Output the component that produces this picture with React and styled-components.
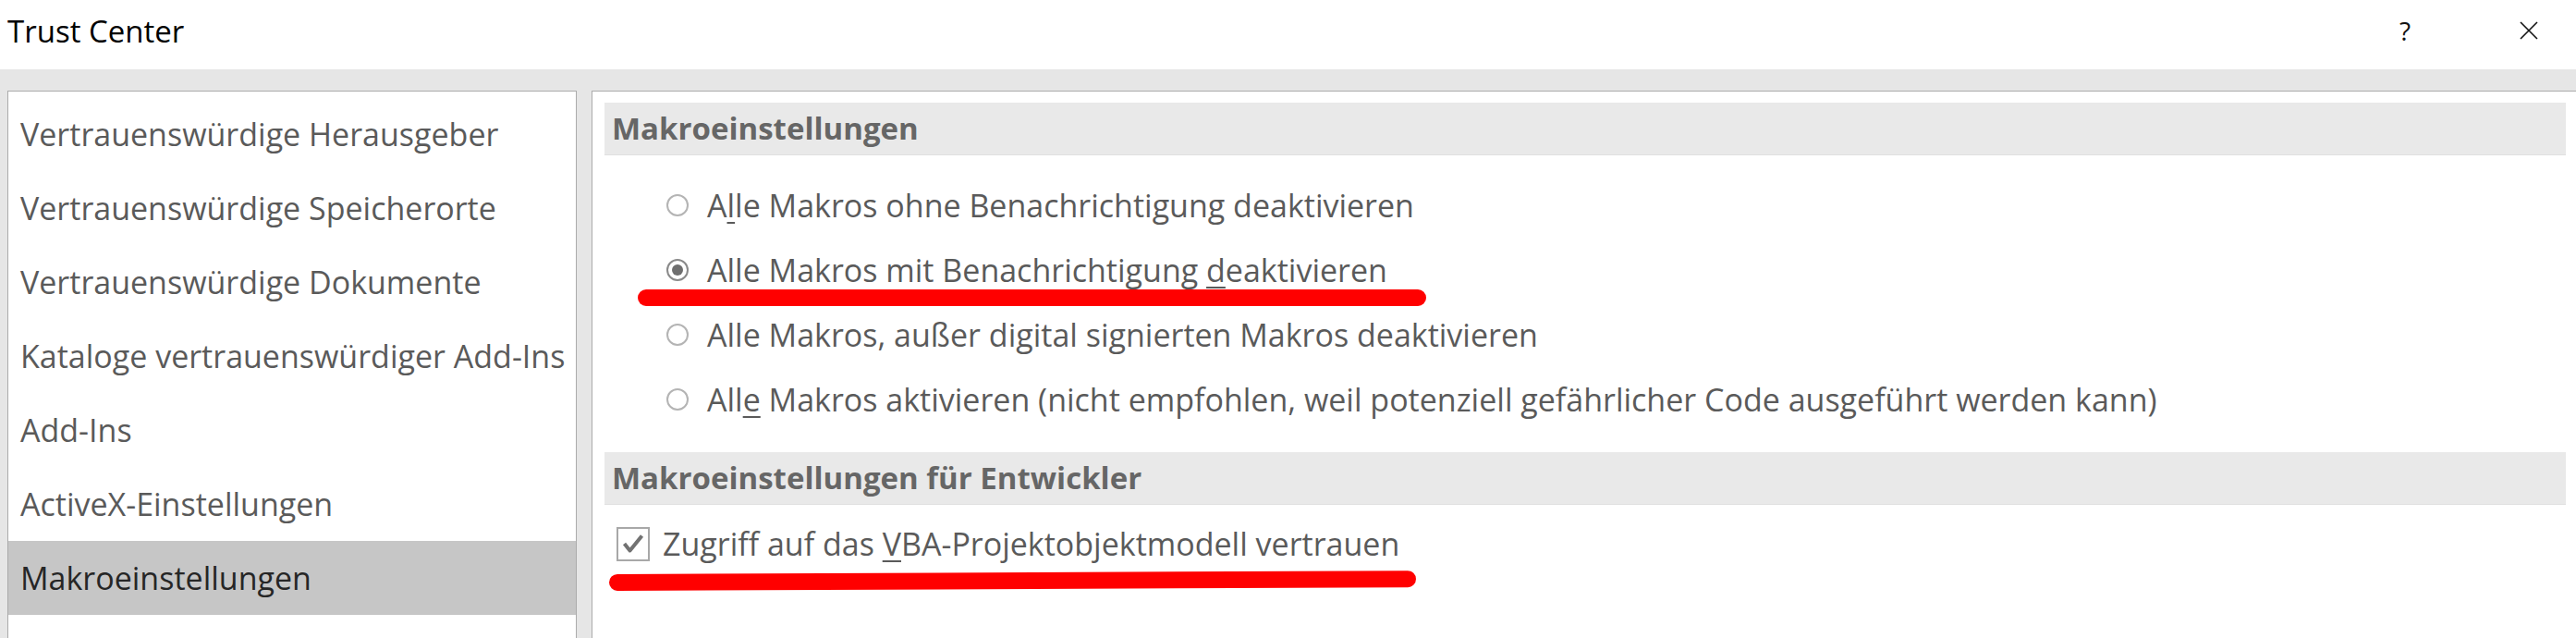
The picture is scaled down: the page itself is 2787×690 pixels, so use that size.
import React from 'react'
import styled, { createGlobalStyle } from 'styled-components'

const GlobalStyle = createGlobalStyle`
  html, body {
    margin: 0;
    padding: 0;
    background: #ffffff;
    overflow: hidden;
  }
  body {
    font-family: "Open Sans", "Noto Sans", sans-serif;
  }
`

const navItems = [
    'Vertrauenswürdige Herausgeber',
    'Vertrauenswürdige Speicherorte',
    'Vertrauenswürdige Dokumente',
    'Kataloge vertrauenswürdiger Add-Ins',
    'Add-Ins',
    'ActiveX-Einstellungen',
    'Makroeinstellungen',
]

const App = () => {
    return (
        <Window>
            <GlobalStyle />
            <TitleBar>
                <Title>Trust Center</Title>
                <HelpButton>?</HelpButton>
                <CloseButton aria-label="Schließen">
                    <svg width="20" height="20" viewBox="0 0 20 20">
                        <path d="M1 1 L19 19 M19 1 L1 19" stroke="#111" strokeWidth="1.6" fill="none" />
                    </svg>
                </CloseButton>
            </TitleBar>
            <Body>
                <Nav>
                    {navItems.map((item) => (
                        <NavItem key={item} $selected={item === 'Makroeinstellungen'}>
                            {item}
                        </NavItem>
                    ))}
                </Nav>
                <Main>
                    <SectionHeader>Makroeinstellungen</SectionHeader>
                    <OptionGroup>
                        <OptionRow>
                            <Radio />
                            <Label>A<u>l</u>le Makros ohne Benachrichtigung deaktivieren</Label>
                        </OptionRow>
                        <OptionRow>
                            <Radio $checked />
                            <Label>Alle Makros mit Benachrichtigung <u>d</u>eaktivieren</Label>
                        </OptionRow>
                        <OptionRow>
                            <Radio />
                            <Label>Alle Makros, außer di<u>g</u>ital signierten Makros deaktivieren</Label>
                        </OptionRow>
                        <OptionRow>
                            <Radio />
                            <Label>All<u>e</u> Makros aktivieren (nicht empfohlen, weil potenziell gefährlicher Code ausgeführt werden kann)</Label>
                        </OptionRow>
                    </OptionGroup>
                    <SectionHeader>Makroeinstellungen für Entwickler</SectionHeader>
                    <CheckGroup>
                        <OptionRow>
                            <CheckBox>
                                <svg width="24" height="22" viewBox="0 0 24 22">
                                    <path d="M2.5 11 L8.5 18.5 L21.5 2.5" stroke="#727272" strokeWidth="4" fill="none" strokeLinejoin="round" />
                                </svg>
                            </CheckBox>
                            <Label>Zugriff auf das <u>V</u>BA-Projektobjektmodell vertrauen</Label>
                        </OptionRow>
                    </CheckGroup>
                    <RedMark $left={49} $top={214} $width={853} $tilt={0} />
                    <RedMark $left={18} $top={522} $width={873} $tilt={-0.25} />
                </Main>
            </Body>
        </Window>
    )
}

const Window = styled.div`
    width: 2787px;
    height: 690px;
    display: flex;
    flex-direction: column;
    background: #ffffff;
`

const TitleBar = styled.header`
    height: 75px;
    display: flex;
    align-items: center;
    padding-left: 8px;
    box-sizing: border-box;
`

const Title = styled.div`
    flex: 1;
    font-size: 33px;
    color: #000;
    margin-top: -8px;
`

const HelpButton = styled.div`
    font-size: 28px;
    color: #111;
    margin-right: 118px;
    margin-top: -10px;
`

const CloseButton = styled.div`
    width: 20px;
    height: 20px;
    margin-right: 41px;
    margin-top: -10px;
    display: flex;
`

const Body = styled.div`
    flex: 1;
    display: flex;
    gap: 16px;
    background: #e6e6e6;
    padding: 23px 0 0 8px;
    min-height: 0;
`

const Nav = styled.nav`
    width: 616px;
    box-sizing: border-box;
    background: #ffffff;
    border: 1px solid #ababab;
    border-bottom: none;
    padding-top: 6px;
`

const NavItem = styled.div`
    height: 80px;
    line-height: 80px;
    padding-left: 13px;
    font-size: 34px;
    white-space: nowrap;
    color: ${(p) => (p.$selected ? '#262626' : '#5a5a5a')};
    background: ${(p) => (p.$selected ? '#c6c6c6' : 'transparent')};
`

const Main = styled.main`
    flex: 1;
    position: relative;
    background: #ffffff;
    border-top: 1px solid #ababab;
    border-left: 1px solid #ababab;
    padding: 12px 11px 0 13px;
`

const SectionHeader = styled.div`
    height: 57px;
    line-height: 55px;
    box-sizing: border-box;
    padding-left: 8px;
    background: #e9e9e9;
    border-bottom: 1px solid #e0e0e0;
    font-size: 33px;
    font-weight: 700;
    color: #666666;
    white-space: nowrap;
`

const OptionGroup = styled.div`
    padding: 19px 0 22px 67px;
`

const CheckGroup = styled.div`
    padding: 7px 0 0 13px;
`

const OptionRow = styled.div`
    height: 70px;
    display: flex;
    align-items: center;
    gap: 20px;
`

const Label = styled.span`
    font-size: 34px;
    color: #5a5a5a;
    white-space: nowrap;
    u {
        text-decoration-thickness: 2px;
        text-underline-offset: 5px;
    }
`

const Radio = styled.span`
    width: 24px;
    height: 24px;
    box-sizing: border-box;
    border-radius: 50%;
    border: 2px solid ${(p) => (p.$checked ? '#8a8a8a' : '#b4b4b4')};
    display: flex;
    align-items: center;
    justify-content: center;
    flex-shrink: 0;
    &::after {
        content: '';
        width: 12px;
        height: 12px;
        border-radius: 50%;
        background: ${(p) => (p.$checked ? '#6e6e6e' : 'transparent')};
    }
`

const CheckBox = styled.span`
    width: 36px;
    height: 37px;
    box-sizing: border-box;
    border: 2px solid #a8a8a8;
    display: flex;
    align-items: center;
    justify-content: center;
    flex-shrink: 0;
    margin-right: -6px;
`

const RedMark = styled.div`
    position: absolute;
    left: ${(p) => p.$left}px;
    top: ${(p) => p.$top}px;
    width: ${(p) => p.$width}px;
    height: 18px;
    border-radius: 9px;
    background: #ff0000;
    transform: rotate(${(p) => p.$tilt}deg);
    transform-origin: left center;
`

export default App
